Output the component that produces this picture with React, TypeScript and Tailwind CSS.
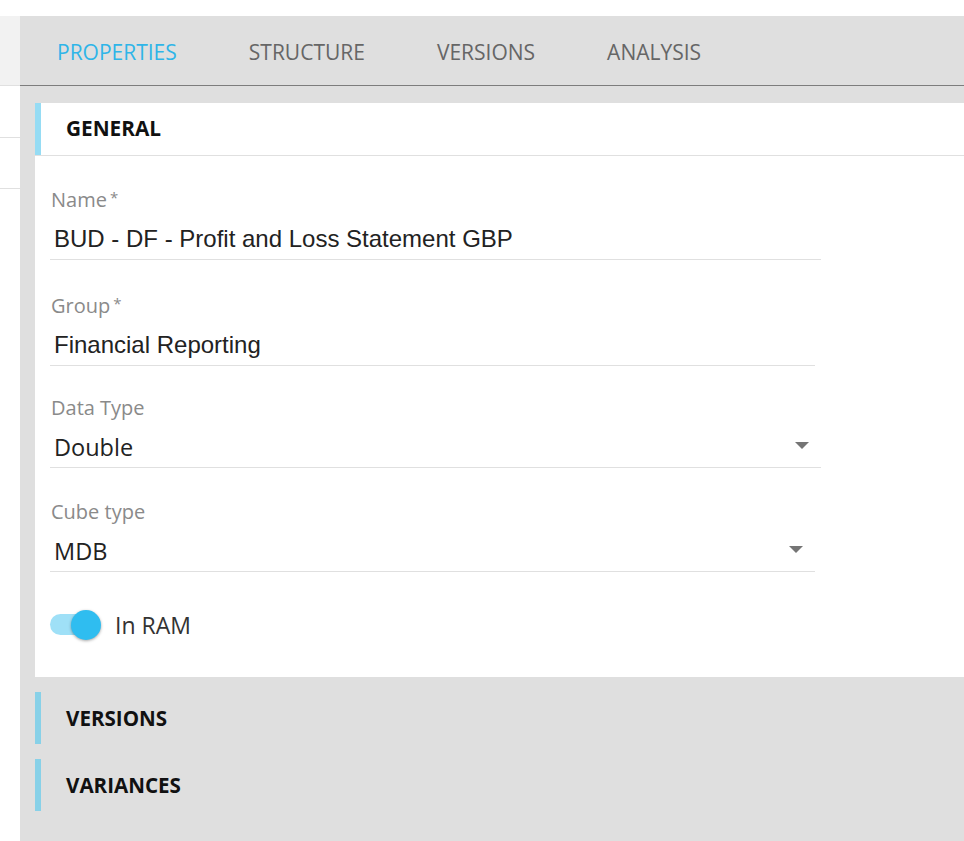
import { ReactNode } from "react";

const sans = "font-['Open_Sans',sans-serif]";
const arial = "font-['Liberation_Sans',Arial,sans-serif]";

const tabs = ["PROPERTIES", "STRUCTURE", "VERSIONS", "ANALYSIS"];

function Field({
  label,
  required,
  value,
  valueFont,
  select,
  width,
  top,
}: {
  label: string;
  required?: boolean;
  value: string;
  valueFont: string;
  select?: boolean;
  width: string;
  top: string;
}) {
  return (
    <div className={`${top} ${width}`}>
      <div className={`${sans} h-[28px] pl-px text-[20px] leading-[28px] text-[#8a8a8a]`}>
        {label}
        {required && <span className="relative -top-[4px] ml-[3px] text-[15px]">*</span>}
      </div>
      <div className="flex h-[46px] items-start border-b border-[#e0e0e0] pl-1 pr-3 pt-[11px]">
        <span className={`${valueFont} flex-1 leading-[28px] text-[#222]`}>{value}</span>
        {select && (
          <svg width="14" height="7" viewBox="0 0 14 7" className="mt-[9px]">
            <path d="M0 0h14L7 7z" fill="#757575" />
          </svg>
        )}
      </div>
    </div>
  );
}

function Section({ title, children }: { title: string; children?: ReactNode }) {
  return (
    <div className="flex h-[52px]">
      <div className="w-[6px] bg-[#88d1e8]" />
      <div className={`${sans} flex items-center pl-[25px] text-[20.6px] font-bold text-[#111]`}>
        {title}
      </div>
      {children}
    </div>
  );
}

export default function App() {
  return (
    <div className="flex h-[841px] w-[964px] flex-col overflow-hidden bg-white">
      <div className="h-4 shrink-0" />
      <div className="flex flex-1">
        <aside className="w-5 shrink-0">
          <div className="h-[70px] border-b border-[#e0e0e0] bg-[#f2f2f2]" />
          <div className="h-[52px] border-b border-[#e0e0e0]" />
          <div className="h-[51px] border-b border-[#e0e0e0]" />
        </aside>

        <main className="flex flex-1 flex-col bg-[#dfdfdf]">
          <nav className="flex h-[70px] items-center border-b border-[#7d7d7d] pt-1">
            {tabs.map((t, i) => (
              <div
                key={t}
                className={`${sans} px-[36px] text-[21px] ${
                  i === 0 ? "pl-[37px] text-[#2fb5e8]" : "text-[#666]"
                }`}
              >
                {t}
              </div>
            ))}
          </nav>

          <div className="pl-[15px] pt-[17px]">
            <div className="bg-white pb-[31px]">
              <div className="flex h-[53px] border-b border-[#e0e0e0]">
                <div className="w-[6px] bg-[#96dcf4]" />
                <div className={`${sans} flex items-center pl-[25px] text-[20.8px] font-bold text-[#111]`}>
                  GENERAL
                </div>
              </div>

              <div className="pl-[15px]">
                <Field
                  top="mt-[30px]"
                  width="w-[771px]"
                  label="Name"
                  required
                  value="BUD - DF - Profit and Loss Statement GBP"
                  valueFont={`${arial} text-[24px]`}
                />
                <Field
                  top="mt-[32px]"
                  width="w-[765px]"
                  label="Group"
                  required
                  value="Financial Reporting"
                  valueFont={`${arial} text-[24px]`}
                />
                <Field
                  top="mt-[28px]"
                  width="w-[771px]"
                  label="Data Type"
                  value="Double"
                  select
                  valueFont={`${sans} text-[23.5px]`}
                />
                <Field
                  top="mt-[30px]"
                  width="w-[765px]"
                  label="Cube type"
                  value="MDB"
                  select
                  valueFont={`${sans} text-[23.5px]`}
                />

                <div className="mt-[32px] flex h-[42px] items-center">
                  <div className="relative h-[30px] w-[52px]">
                    <div className="absolute left-0 top-[4px] h-[21px] w-[41px] rounded-full bg-[#9fe0f7]" />
                    <div className="absolute left-[21px] top-0 h-[30px] w-[30px] rounded-full bg-[#2fbdf0] shadow-[0_1px_3px_rgba(0,0,0,0.35)]" />
                  </div>
                  <span className={`${sans} ml-[13px] text-[23px] text-[#333]`}>In RAM</span>
                </div>
              </div>
            </div>

            <div className="mt-[15px] flex flex-col gap-[15px]">
              <Section title="VERSIONS" />
              <Section title="VARIANCES" />
            </div>
          </div>
        </main>
      </div>
    </div>
  );
}
